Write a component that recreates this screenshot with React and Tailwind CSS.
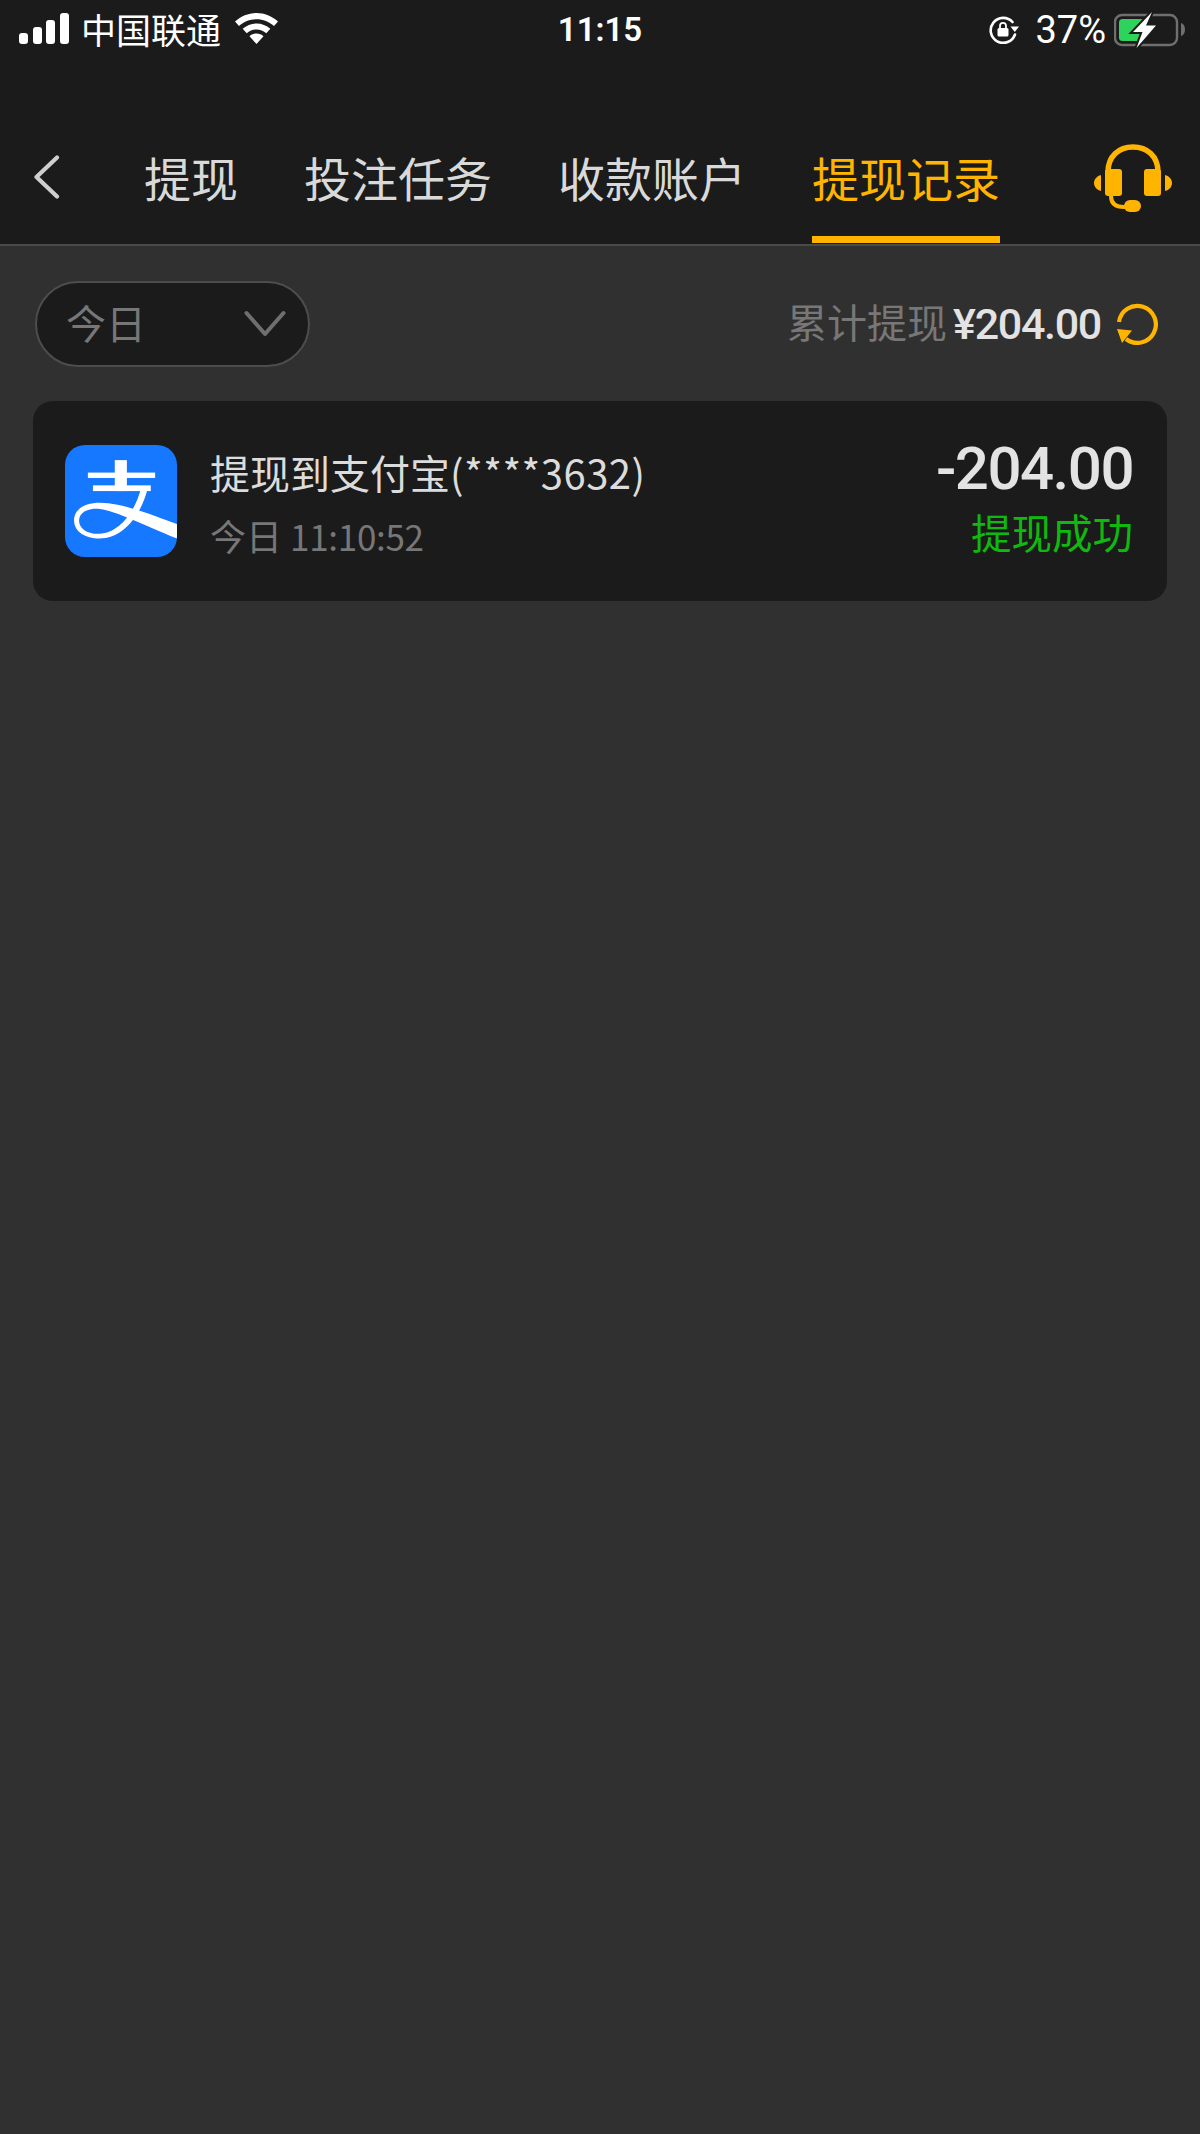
import React from 'react';

const cjk = { fontFamily: '"Noto Sans CJK SC", "Noto Sans", sans-serif' };
const latin = { fontFamily: 'Roboto, "Noto Sans CJK SC", sans-serif' };

function SignalBars() {
  return (
    <svg width="50" height="31" viewBox="0 0 50 31" fill="#fff">
      <rect x="0" y="20" width="9" height="11" rx="3" />
      <rect x="14" y="14" width="9" height="17" rx="3" />
      <rect x="27" y="7" width="9" height="24" rx="3" />
      <rect x="41" y="0" width="9" height="31" rx="3" />
    </svg>
  );
}

function Wifi() {
  return (
    <svg width="43" height="31" viewBox="0 0 43 31" fill="#fff">
      <path d="M21.5 0C13.5 0 6 3.2 0 8.5l4 4.5C8.8 8.8 15 6.3 21.5 6.3S34.2 8.8 39 13l4-4.5C37 3.2 29.5 0 21.5 0z" />
      <path d="M21.5 10.5c-5.2 0-10 2-13.8 5.3l4 4.5c2.7-2.3 6.1-3.7 9.8-3.7s7.1 1.4 9.8 3.7l4-4.5c-3.8-3.3-8.6-5.3-13.8-5.3z" />
      <path d="M21.5 20.5c-2.7 0-5.2 1-7 2.7l7 7.8 7-7.8c-1.8-1.7-4.3-2.7-7-2.7z" />
    </svg>
  );
}

function RotationLock() {
  return (
    <svg width="32" height="28" viewBox="0 0 32 28" fill="none">
      <path d="M27 18.5A12.5 12.5 0 1 1 24.5 6" stroke="#fff" strokeWidth="2.6" strokeLinecap="round" />
      <path d="M22.5 10.5h8.5l-4.2 5.5z" fill="#fff" />
      <rect x="9.5" y="12" width="11" height="8.5" rx="1.5" fill="#fff" />
      <path d="M12 12V9.8a3 3 0 0 1 6 0V12" stroke="#fff" strokeWidth="1.8" />
    </svg>
  );
}

function Battery() {
  return (
    <svg width="72" height="36" viewBox="0 0 72 36" fill="none">
      <rect x="1" y="3" width="62" height="30" rx="7" stroke="#6f6f6f" strokeWidth="2.4" />
      <path d="M67 11c2.5 .8 4 3 4 6.5s-1.500 5.700-4 6.500z" fill="#6f6f6f" />
      <rect x="5" y="7" width="25" height="22" rx="3.5" fill="#2dd35c" />
      <path d="M38 0L19 20h9.500l-6 16L42 13.500H32z" fill="#fff" stroke="#1b1b1b" strokeWidth="4" paintOrder="stroke" />
    </svg>
  );
}

function BackArrow() {
  return (
    <svg width="27" height="44" viewBox="0 0 27 44" fill="none">
      <path d="M24 2.5L3.5 22 24 41.5" stroke="#cfcfcf" strokeWidth="4.2" strokeLinecap="round" strokeLinejoin="round" />
    </svg>
  );
}

function Headset() {
  return (
    <svg width="78" height="68" viewBox="0 0 78 68" fill="#ffb400">
      <path d="M14 28C14 12 25 3 39 3s25 9 25 25" fill="none" stroke="#ffb400" strokeWidth="5.5" />
      <rect x="11" y="25" width="17" height="27" rx="3" />
      <rect x="50" y="25" width="17" height="27" rx="3" />
      <path d="M7 31v16C3 46 0 43 0 39s3-7 7-8z" />
      <path d="M71 31v16c4-1 7-4 7-8s-3-7-7-8z" />
      <path d="M17 52c0 7 4 11 13 11h8" fill="none" stroke="#ffb400" strokeWidth="4" />
      <rect x="30" y="56" width="17" height="12" rx="6" />
    </svg>
  );
}

function Chevron() {
  return (
    <svg width="42" height="28" viewBox="0 0 42 28" fill="none">
      <path d="M2.5 3L21 24 39.5 3" stroke="#6f6f6f" strokeWidth="4" strokeLinecap="round" strokeLinejoin="round" />
    </svg>
  );
}

function Refresh() {
  return (
    <svg width="42" height="42" viewBox="0 0 42 42" fill="none">
      <path d="M3 19A18.5 18.5 0 1 1 10 36" stroke="#ffb400" strokeWidth="4.2" />
      <path d="M1 26l15 1.5L6 40z" fill="#ffb400" />
    </svg>
  );
}

function AlipayLogo() {
  return (
    <svg width="112" height="112" viewBox="0 0 333 333" className="shrink-0 rounded-[20px]">
      <rect width="333" height="333" fill="#1677ff" />
      <rect x="148" y="45" width="36" height="92" fill="#fff" />
      <rect x="68" y="82" width="200" height="16" fill="#fff" />
      <rect x="83" y="120" width="172" height="17" fill="#fff" />
      <path d="M226 128C212 190 165 262 102 264C62 265 40 245 42 222C44 198 72 186 104 190C150 196 230 235 333 278V235C270 212 170 172 104 172C60 172 26 190 27 226C28 258 60 278 102 278C175 278 228 205 246 128z" fill="#fff" />
    </svg>
  );
}

export default function App() {
  const tabs = ['提现', '投注任务', '收款账户'];

  return (
    <div className="min-h-[2134px] w-[1200px] bg-[#303030]" style={cjk}>
      <header className="h-[246px] border-b-2 border-[#4a4a4a] bg-[#1b1b1b] flex flex-col">
        <div className="h-[60px] pt-[13px] grid grid-cols-[1fr_auto_1fr] items-start text-white">
          <div className="flex items-start pl-[19px]">
            <SignalBars />
            <span className="ml-[12px] text-[35px] leading-[31px] w-[140px] whitespace-nowrap">中国联通</span>
            <div className="ml-[14px]"><Wifi /></div>
          </div>
          <span className="-mt-[5px] text-[33px] leading-[44px] font-semibold" style={latin}>11:15</span>
          <div className="flex items-start justify-end pr-[14px]">
            <div className="mt-[3px]"><RotationLock /></div>
            <span className="ml-[15px] text-[38px] leading-[34px]" style={latin}>37%</span>
            <div className="ml-[8px] -mt-[1px]"><Battery /></div>
          </div>
        </div>
        <nav className="flex-1 flex items-start pl-[33px] pr-[28px] pt-[96px]">
          <div className="-mt-[1px] w-[111px]"><BackArrow /></div>
          <div className="flex gap-[66px] flex-1 text-[47px] leading-[42px] text-[#d9d9d9]">
            {tabs.map(t => (
              <span key={t} className="whitespace-nowrap">{t}</span>
            ))}
            <span className="whitespace-nowrap text-[#ffb400] h-[87px] border-b-[7px] border-[#ffb400]">提现记录</span>
          </div>
          <div className="-mt-[12px]"><Headset /></div>
        </nav>
      </header>

      <div className="px-[33px]">
        <div className="pt-[35px] flex items-center justify-between">
          <button className="ml-[2px] w-[275px] h-[86px] rounded-full bg-[#1b1b1b] border-2 border-[#4d4d4d] pl-[29px] pr-[22px] flex items-center justify-between text-[40px] text-[#777777]">
            <span className="mb-[4px]">今日</span>
            <Chevron />
          </button>
          <div className="flex items-center pr-[9px]">
            <span className="mb-[6px] text-[40px] text-[#777777]">累计提现</span>
            <span className="ml-[6px] text-[43px] font-medium tracking-[-1.3px] text-[#e3e3e3]" style={latin}>¥204.00</span>
            <div className="ml-[15px]"><Refresh /></div>
          </div>
        </div>

        <div className="mt-[34px] h-[200px] rounded-[20px] bg-[#1b1b1b] pl-[32px] pr-[34px] flex items-center">
          <AlipayLogo />
          <div className="ml-[33px] flex-1 pt-[3px]">
            <div className="text-[40px] leading-[50px] text-[#dcdcdc]">提现到支付宝<span className="tracking-[0.5px]">(****3632)</span></div>
            <div className="mt-[16px] text-[36px] leading-[44px] text-[#777777]">今日 <span className="text-[35px] tracking-[-0.3px]">11:10:52</span></div>
          </div>
          <div className="text-right pb-[4px]">
            <div className="text-[60px] leading-[52px] font-medium tracking-[-1.5px] text-[#e3e3e3]" style={latin}>-204.00</div>
            <div className="mt-[14px] text-[40.5px] leading-[46px] text-[#10b90f]">提现成功</div>
          </div>
        </div>
      </div>
    </div>
  );
}
